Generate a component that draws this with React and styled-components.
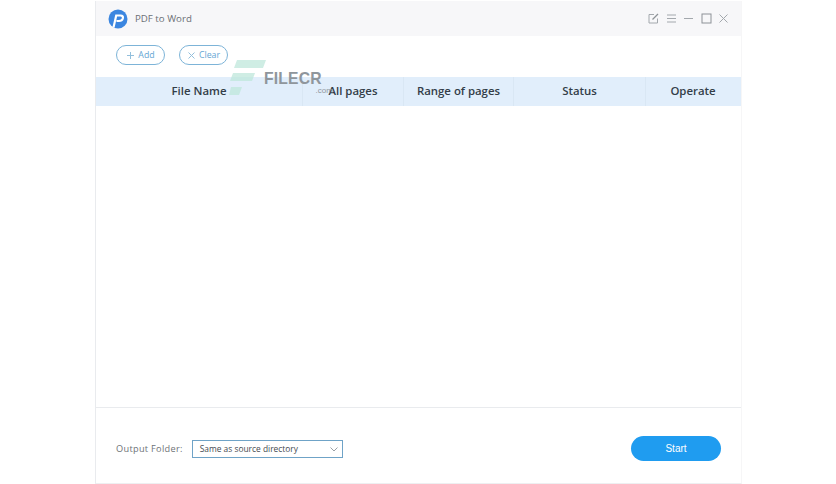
import React from "react";
import styled, { createGlobalStyle } from "styled-components";

const GlobalStyle = createGlobalStyle`
  html, body {
    margin: 0;
    padding: 0;
    background: #ffffff;
    font-family: "Open Sans", "Liberation Sans", sans-serif;
  }
`;

const Page = styled.div`
  width: 836px;
  height: 484px;
  padding: 1px 94px 1px 95px;
  box-sizing: border-box;
  background: #fff;
`;

const Window = styled.div`
  position: relative;
  height: 482px;
  display: flex;
  flex-direction: column;
  border-left: 1px solid #e9ebee;
  border-bottom: 1px solid #eeeff1;
  border-right: 1px solid #f6f6f7;
`;

const TitleBar = styled.div`
  height: 35px;
  flex: none;
  display: flex;
  align-items: center;
  padding: 0 12px 0 12px;
  background: #f7f7f9;
`;

const Logo = styled.svg`
  width: 20px;
  height: 20px;
  flex: none;
`;

const Title = styled.div`
  margin-left: 7px;
  font-size: 9.7px;
  color: #6b6f75;
  flex: 1;
`;

const WindowIcons = styled.div`
  display: flex;
  align-items: center;
  gap: 6.5px;
`;

const WinIcon = styled.svg`
  width: 11px;
  height: 11px;
  fill: none;
  stroke: ${(p) => p.$stroke || "#a3a8ad"};
  stroke-width: 1;
`;

const Toolbar = styled.div`
  height: 41px;
  flex: none;
  display: flex;
  align-items: center;
  gap: 14px;
  padding: 0 0 3px 20px;
  box-sizing: border-box;
`;

const PillButton = styled.button`
  height: 20px;
  width: ${(p) => p.$width}px;
  padding: 0;
  display: flex;
  align-items: center;
  justify-content: center;
  gap: 3px;
  border: 1px solid #7db4d8;
  border-radius: 10px;
  background: #fff;
  color: #64a6d4;
  font-family: inherit;
  font-size: 8.8px;
`;

const PillIcon = styled.svg`
  width: 9px;
  height: 9px;
  fill: none;
  stroke: #93bfdc;
  stroke-width: 1;
`;

const TableHeader = styled.div`
  height: 29px;
  flex: none;
  display: grid;
  grid-template-columns: 207px 101px 110px 132px 1fr;
  background: #e1eefb;
`;

const HeaderCell = styled.div`
  display: flex;
  align-items: center;
  justify-content: center;
  padding-bottom: 2px;
  box-sizing: border-box;
  font-size: 11.4px;
  font-weight: 600;
  color: #333d48;
  border-right: 1px solid ${(p) => (p.$last ? "transparent" : "#d9e7f4")};
`;

const TableBody = styled.div`
  flex: 1;
  border-bottom: 1px solid #e9ebee;
`;

const Footer = styled.div`
  height: 75px;
  flex: none;
  display: flex;
  align-items: center;
  padding: 6px 20px 0 20px;
  box-sizing: border-box;
`;

const FolderLabel = styled.span`
  font-size: 9.2px;
  letter-spacing: 0.3px;
  color: #6d7277;
`;

const FolderSelect = styled.div`
  margin-left: 9px;
  width: 151px;
  height: 18px;
  box-sizing: border-box;
  display: flex;
  align-items: center;
  justify-content: space-between;
  padding: 0 3px 0 7px;
  border: 1px solid #6fa3c7;
  font-size: 8.4px;
  color: #454a50;
`;

const Chevron = styled.svg`
  width: 10px;
  height: 10px;
  fill: none;
  stroke: #9aa0a6;
  stroke-width: 1;
`;

const StartButton = styled.button`
  margin-left: auto;
  width: 90px;
  height: 25px;
  padding: 0;
  border: none;
  border-radius: 13px;
  background: #1f9cf0;
  color: #fff;
  font-family: "Liberation Sans", sans-serif;
  font-size: 10px;
`;

const Watermark = styled.div`
  position: absolute;
  left: 133px;
  top: 59px;
  display: flex;
  pointer-events: none;
`;

const WatermarkMark = styled.svg`
  width: 38px;
  height: 36px;
  fill: #bfe8dc;
  opacity: 0.75;
`;

const WatermarkText = styled.div`
  position: relative;
  margin: 9px 0 0 -3px;
  font-family: "Liberation Sans", sans-serif;
  font-size: 15.7px;
  font-weight: 700;
  letter-spacing: 0.2px;
  line-height: 20px;
  color: #8f969c;
`;

const WatermarkCom = styled.span`
  position: absolute;
  right: -11px;
  top: 17px;
  font-size: 8px;
  font-weight: 400;
  line-height: 10px;
  letter-spacing: 0;
  color: #8f969c;
`;

const columns = ["File Name", "All pages", "Range of pages", "Status", "Operate"];

const App = () => {
  return (
    <Page>
      <GlobalStyle />
      <Window>
        <TitleBar>
          <Logo viewBox="0 0 20 20">
            <circle cx="10" cy="10" r="9.5" fill="#3b86e0" />
            <path
              d="M5.5 18.5 L8.2 6.5 H12.5 C14.8 6.5 15.2 8 14.8 9.5 C14.3 11.2 12.8 12 11 12 H8.5"
              fill="none"
              stroke="#fff"
              strokeWidth="2.2"
            />
          </Logo>
          <Title>PDF to Word</Title>
          <WindowIcons>
            <WinIcon viewBox="0 0 11 11">
              <path d="M9.5 5.5V10H1V1.5H6" />
              <path d="M4.5 6.5L10 1" stroke="#8d9297" strokeWidth="1.3" />
            </WinIcon>
            <WinIcon viewBox="0 0 11 11">
              <path d="M1 2H10M1 5.5H10M1 9H10" />
            </WinIcon>
            <WinIcon viewBox="0 0 11 11">
              <path d="M1 5.5H10" />
            </WinIcon>
            <WinIcon viewBox="0 0 11 11" $stroke="#8d9297">
              <rect x="1" y="1" width="9" height="9" />
            </WinIcon>
            <WinIcon viewBox="0 0 11 11">
              <path d="M1.5 1.5L9.5 9.5M9.5 1.5L1.5 9.5" />
            </WinIcon>
          </WindowIcons>
        </TitleBar>
        <Toolbar>
          <PillButton $width={49}>
            <PillIcon viewBox="0 0 9 9">
              <path d="M4.5 1V8M1 4.5H8" />
            </PillIcon>
            Add
          </PillButton>
          <PillButton $width={49}>
            <PillIcon viewBox="0 0 9 9">
              <path d="M1.5 1.5L7.5 7.5M7.5 1.5L1.5 7.5" />
            </PillIcon>
            Clear
          </PillButton>
        </Toolbar>
        <TableHeader>
          {columns.map((name, i) => (
            <HeaderCell key={name} $last={i === columns.length - 1}>
              {name}
            </HeaderCell>
          ))}
        </TableHeader>
        <TableBody />
        <Footer>
          <FolderLabel>Output Folder:</FolderLabel>
          <FolderSelect>
            Same as source directory
            <Chevron viewBox="0 0 10 10">
              <path d="M1.5 3.5L5 7L8.5 3.5" />
            </Chevron>
          </FolderSelect>
          <StartButton>Start</StartButton>
        </Footer>
        <Watermark>
          <WatermarkMark viewBox="0 0 38 36">
            <polygon points="8,0 37,0 34,8 5,8" />
            <polygon points="4,13 26,13 23,21 1,21" />
            <polygon points="2,27 13,27 10,35 0,35" />
          </WatermarkMark>
          <WatermarkText>
            FILECR
            <WatermarkCom>.com</WatermarkCom>
          </WatermarkText>
        </Watermark>
      </Window>
    </Page>
  );
};

export default App;
